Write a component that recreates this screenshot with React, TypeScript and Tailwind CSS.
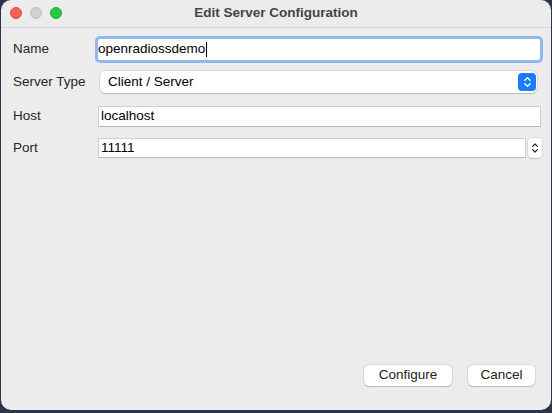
import React from 'react';

const Chevrons: React.FC<{ className?: string }> = ({ className }) => (
  <svg viewBox="0 0 10 16" className={className} fill="none" stroke="currentColor" strokeWidth={1.6} strokeLinecap="round" strokeLinejoin="round">
    <path d="M2 6 L5 3 L8 6" />
    <path d="M2 10 L5 13 L8 10" />
  </svg>
);

const App: React.FC = () => {
  return (
    <div className="w-[552px] h-[413px] bg-[#2f3347] px-[1px] pb-[3px] font-['Liberation_Sans',Arial,sans-serif] text-[13.5px] text-[#262626]">
      <div className="h-full rounded-[10px] bg-[#ececec] flex flex-col overflow-hidden">
        {/* title bar */}
        <div className="relative h-[28px] border-b border-[#d4d4d4] flex items-center justify-center">
          <div className="absolute left-[9px] top-[7px] flex gap-[8px]">
            <span className="w-[12px] h-[12px] rounded-full bg-[#fe5f57] border border-[#e2463f]" />
            <span className="w-[12px] h-[12px] rounded-full bg-[#d0d0d0] border border-[#bdbdbd]" />
            <span className="w-[12px] h-[12px] rounded-full bg-[#28c840] border border-[#1aab2c]" />
          </div>
          <span className="font-bold text-[13.5px] text-[#454545]">Edit Server Configuration</span>
        </div>

        {/* form */}
        <div className="flex-1 flex flex-col pl-[12px] pr-[8px]">
          <div className="flex items-center mt-[8px] h-[27px]">
            <label className="w-[82px]">Name</label>
            <div className="w-[448px] h-[27px] border-[3px] border-[#92b8ee] rounded-[5px] bg-white flex items-center">
              <span className="text-black">openradiossdemo</span>
              <span className="w-px h-[15px] bg-black ml-px" />
            </div>
          </div>

          <div className="flex items-center mt-[8px] h-[22px]">
            <label className="w-[87px]">Server Type</label>
            <div className="w-[437px] h-[22px] rounded-[5px] bg-white shadow-[0_0_0_0.5px_rgba(0,0,0,0.15),0_1px_1px_rgba(0,0,0,0.15)] flex items-center justify-between pl-[8px] pr-[1px]">
              <span className="text-black">Client / Server</span>
              <span className="w-[18px] h-[18px] rounded-[4px] bg-[#1a7cf8] text-white flex items-center justify-center">
                <Chevrons className="w-[9px] h-[14px]" />
              </span>
            </div>
          </div>

          <div className="flex items-center mt-[13px] h-[21px]">
            <label className="w-[85px]">Host</label>
            <div className="w-[443px] h-[21px] bg-white border border-[#cfcfcf] border-b-[#b8b8b8] flex items-center pl-[2px]">
              <span className="text-black">localhost</span>
            </div>
          </div>

          <div className="flex items-center mt-[11px] h-[20px]">
            <label className="w-[85px]">Port</label>
            <div className="w-[428px] h-[20px] bg-white border border-[#cfcfcf] border-b-[#b8b8b8] flex items-center pl-[2px]">
              <span className="text-black">11111</span>
            </div>
            <div className="ml-[2px] w-[14px] h-[20px] rounded-[4px] bg-white shadow-[0_0_0_0.5px_rgba(0,0,0,0.15),0_1px_1px_rgba(0,0,0,0.12)] flex items-center justify-center text-[#2a2a2a]">
              <Chevrons className="w-[8px] h-[18px]" />
            </div>
          </div>

          <div className="flex-1" />

          <div className="flex justify-end gap-[16px] mb-[24px] pr-[8px]">
            <button className="w-[88px] h-[21px] rounded-[5px] bg-white shadow-[0_0_0_0.5px_rgba(0,0,0,0.15),0_1px_1px_rgba(0,0,0,0.15)] text-[#222]">
              Configure
            </button>
            <button className="w-[67px] h-[21px] rounded-[5px] bg-white shadow-[0_0_0_0.5px_rgba(0,0,0,0.15),0_1px_1px_rgba(0,0,0,0.15)] text-[#222]">
              Cancel
            </button>
          </div>
        </div>
      </div>
    </div>
  );
};

export default App;
